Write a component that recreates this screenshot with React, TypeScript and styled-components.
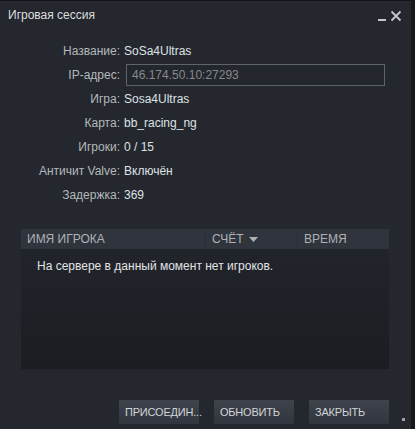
import React from "react";
import styled, { createGlobalStyle } from "styled-components";

const Global = createGlobalStyle`
  html, body { margin: 0; padding: 0; background: #15171b; }
  body { font-family: "Liberation Sans", Arial, sans-serif; }
`;

const Window = styled.div`
  width: 411px;
  height: 428px;
  border-top: 1px solid #111317;
  background: #24272e;
  display: flex;
  flex-direction: column;
  position: relative;
`;

const TitleBar = styled.div`
  height: 30px;
  display: flex;
  align-items: center;
  padding: 0 8px;
  justify-content: space-between;
`;

const Title = styled.div`
  color: #dcdedf;
  font-size: 12px;
  margin-top: -2px;
`;

const Controls = styled.div`
  display: flex;
  align-items: center;
  gap: 3px;
  margin-right: 1px;
`;

const Info = styled.div`
  display: grid;
  grid-template-columns: 120px 1fr;
  grid-auto-rows: 24px;
  column-gap: 4px;
  margin-top: 8px;
  padding-right: 26px;
`;

const Label = styled.div`
  color: #b4b8bc;
  font-size: 12px;
  text-align: right;
  align-self: center;
`;

const Value = styled.div`
  color: #dfe2e5;
  font-size: 12px;
  align-self: center;
`;

const IpBox = styled.div`
  height: 20px;
  margin-left: 2px;
  border: 1px solid #5f636a;
  background: #23262c;
  color: #85898e;
  font-size: 12px;
  display: flex;
  align-items: center;
  padding-left: 5px;
  align-self: center;
`;

const List = styled.div`
  margin: 22px 22px 0 21px;
  height: 140px;
  display: flex;
  flex-direction: column;
  background: linear-gradient(#22252b, #1a1d22);
`;

const ListHeader = styled.div`
  height: 20px;
  background: #30343c;
  display: grid;
  grid-template-columns: 184px 92px 1fr;
`;

const Col = styled.div<{ $divider?: boolean }>`
  display: flex;
  align-items: center;
  gap: 5px;
  padding-left: 6px;
  color: #aeb2b7;
  font-size: 12px;
  border-left: ${(p) => (p.$divider ? "1px solid #2a2d34" : "none")};
`;

const Empty = styled.div`
  color: #e2e4e6;
  font-size: 12px;
  padding: 10px 0 0 16px;
`;

const Footer = styled.div`
  display: flex;
  justify-content: flex-end;
  gap: 15px;
  padding-right: 22px;
  margin-top: 31px;
`;

const Button = styled.div`
  width: 80px;
  height: 24px;
  box-sizing: border-box;
  padding-left: 6px;
  display: flex;
  align-items: center;
  color: #d2d5d8;
  font-size: 11px;
  letter-spacing: -0.2px;
  background: linear-gradient(#3e434c, #31353d);
  white-space: nowrap;
`;

const Grip = styled.div`
  position: absolute;
  right: 6px;
  bottom: 8px;
  width: 3px;
  height: 3px;
  background: #9aa0a6;
`;

const rows: [string, string][] = [
  ["Название:", "SoSa4Ultras"],
  ["IP-адрес:", "46.174.50.10:27293"],
  ["Игра:", "Sosa4Ultras"],
  ["Карта:", "bb_racing_ng"],
  ["Игроки:", "0 / 15"],
  ["Античит Valve:", "Включён"],
  ["Задержка:", "369"],
];

export default function App() {
  return (
    <>
      <Global />
      <Window>
        <TitleBar>
          <Title>Игровая сессия</Title>
          <Controls>
            <svg width="10" height="12" viewBox="0 0 10 12">
              <rect x="1" y="9" width="8" height="2" fill="#c4c7ca" />
            </svg>
            <svg width="12" height="12" viewBox="0 0 12 12">
              <path d="M1.5 1.5 L10.5 10.5 M10.5 1.5 L1.5 10.5" stroke="#c4c7ca" strokeWidth="1.8" />
            </svg>
          </Controls>
        </TitleBar>
        <Info>
          {rows.map(([l, v]) => (
            <React.Fragment key={l}>
              <Label>{l}</Label>
              {l === "IP-адрес:" ? <IpBox>{v}</IpBox> : <Value>{v}</Value>}
            </React.Fragment>
          ))}
        </Info>
        <List>
          <ListHeader>
            <Col>ИМЯ ИГРОКА</Col>
            <Col $divider>
              СЧЁТ
              <svg width="9" height="5" viewBox="0 0 9 5">
                <path d="M0 0 H9 L4.5 5 Z" fill="#aeb2b7" />
              </svg>
            </Col>
            <Col $divider>ВРЕМЯ</Col>
          </ListHeader>
          <Empty>На сервере в данный момент нет игроков.</Empty>
        </List>
        <Footer>
          <Button>ПРИСОЕДИН...</Button>
          <Button>ОБНОВИТЬ</Button>
          <Button>ЗАКРЫТЬ</Button>
        </Footer>
        <Grip />
      </Window>
    </>
  );
}
